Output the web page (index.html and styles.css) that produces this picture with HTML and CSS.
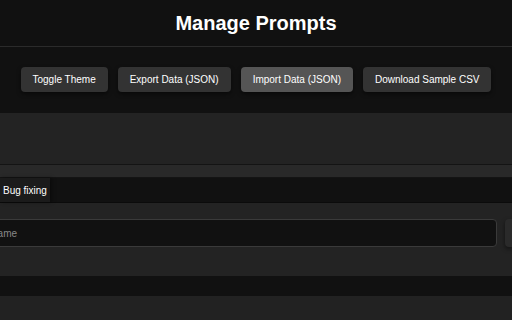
FILE: index.html
```html
<!DOCTYPE html>
<html lang="en">
<head>
    <meta charset="UTF-8">
    <meta name="viewport" content="width=device-width, initial-scale=1.0">
    <title>Manage Prompts</title>
    <link rel="stylesheet" href="styles.css">
</head>
<body>
    <header class="header">
        <h1>Manage Prompts</h1>
    </header>
    <div class="toolbar">
        <button type="button" class="btn">Toggle Theme</button>
        <button type="button" class="btn">Export Data (JSON)</button>
        <button type="button" class="btn active">Import Data (JSON)</button>
        <button type="button" class="btn">Download Sample CSV</button>
    </div>
    <div class="panel"></div>
    <div class="strip"></div>
    <div class="tabs">
        <span class="tab">Bug fixing</span>
    </div>
    <div class="form-area">
        <div class="form-row">
            <input type="text" class="name-input" placeholder="Prompt name">
            <span class="side-btn"></span>
        </div>
    </div>
    <div class="divider"></div>
    <div class="list"></div>
</body>
</html>
```

FILE: styles.css
```css
body {
    font-family: "Liberation Sans", Arial, sans-serif;
    margin: 0;
    background-color: #222;
    color: #fff;
    overflow: hidden;
}
.header {
    background-color: #111;
    height: 46px;
    border-bottom: 1px solid #2b2b2b;
    display: flex;
    align-items: center;
    justify-content: center;
}
.header h1 {
    margin: 0;
    font-size: 20px;
    font-weight: bold;
    color: #fff;
}
.toolbar {
    background-color: #111;
    height: 66px;
    display: flex;
    justify-content: center;
    align-items: flex-start;
    gap: 10px;
    padding-top: 20px;
    box-sizing: border-box;
}
.btn {
    font-family: inherit;
    font-size: 10px;
    color: #fff;
    background-color: #333;
    border: none;
    border-radius: 4px;
    height: 25px;
    padding: 0 12px;
    box-shadow: 0 2px 4px rgba(0, 0, 0, 0.5);
    cursor: pointer;
}
.btn.active {
    background-color: #555;
}
.panel {
    height: 51px;
    background-color: #232323;
    border-bottom: 1px solid #141414;
}
.strip {
    height: 12px;
    background-color: #292929;
    border-bottom: 1px solid #141414;
}
.tabs {
    height: 24px;
    background-color: #111;
    border-bottom: 1px solid #0b0b0b;
    display: flex;
}
.tab {
    display: flex;
    align-items: center;
    padding: 0 3px;
    white-space: nowrap;
    background-color: #1b1b1b;
    font-size: 10px;
    color: #fff;
    box-shadow: 2px 0 4px rgba(0, 0, 0, 0.4);
}
.form-area {
    height: 73px;
    background-color: #232323;
    padding-top: 16px;
    box-sizing: border-box;
}
.form-row {
    display: flex;
    gap: 8px;
    margin-left: -54px;
}
.name-input {
    flex: 1;
    height: 28px;
    box-sizing: border-box;
    background-color: #111;
    border: 1px solid #3a3a3a;
    border-radius: 4px;
    padding: 0 10px;
    font-family: inherit;
    font-size: 10px;
    color: #fff;
}
.name-input::placeholder {
    color: #888;
}
.side-btn {
    width: 7px;
    height: 28px;
    background-color: #2a2a2a;
    border-radius: 4px 0 0 4px;
    box-shadow: 0 2px 4px rgba(0, 0, 0, 0.5);
}
.divider {
    height: 20px;
    background-color: #111;
}
.list {
    height: 40px;
    background-color: #222;
}
```
